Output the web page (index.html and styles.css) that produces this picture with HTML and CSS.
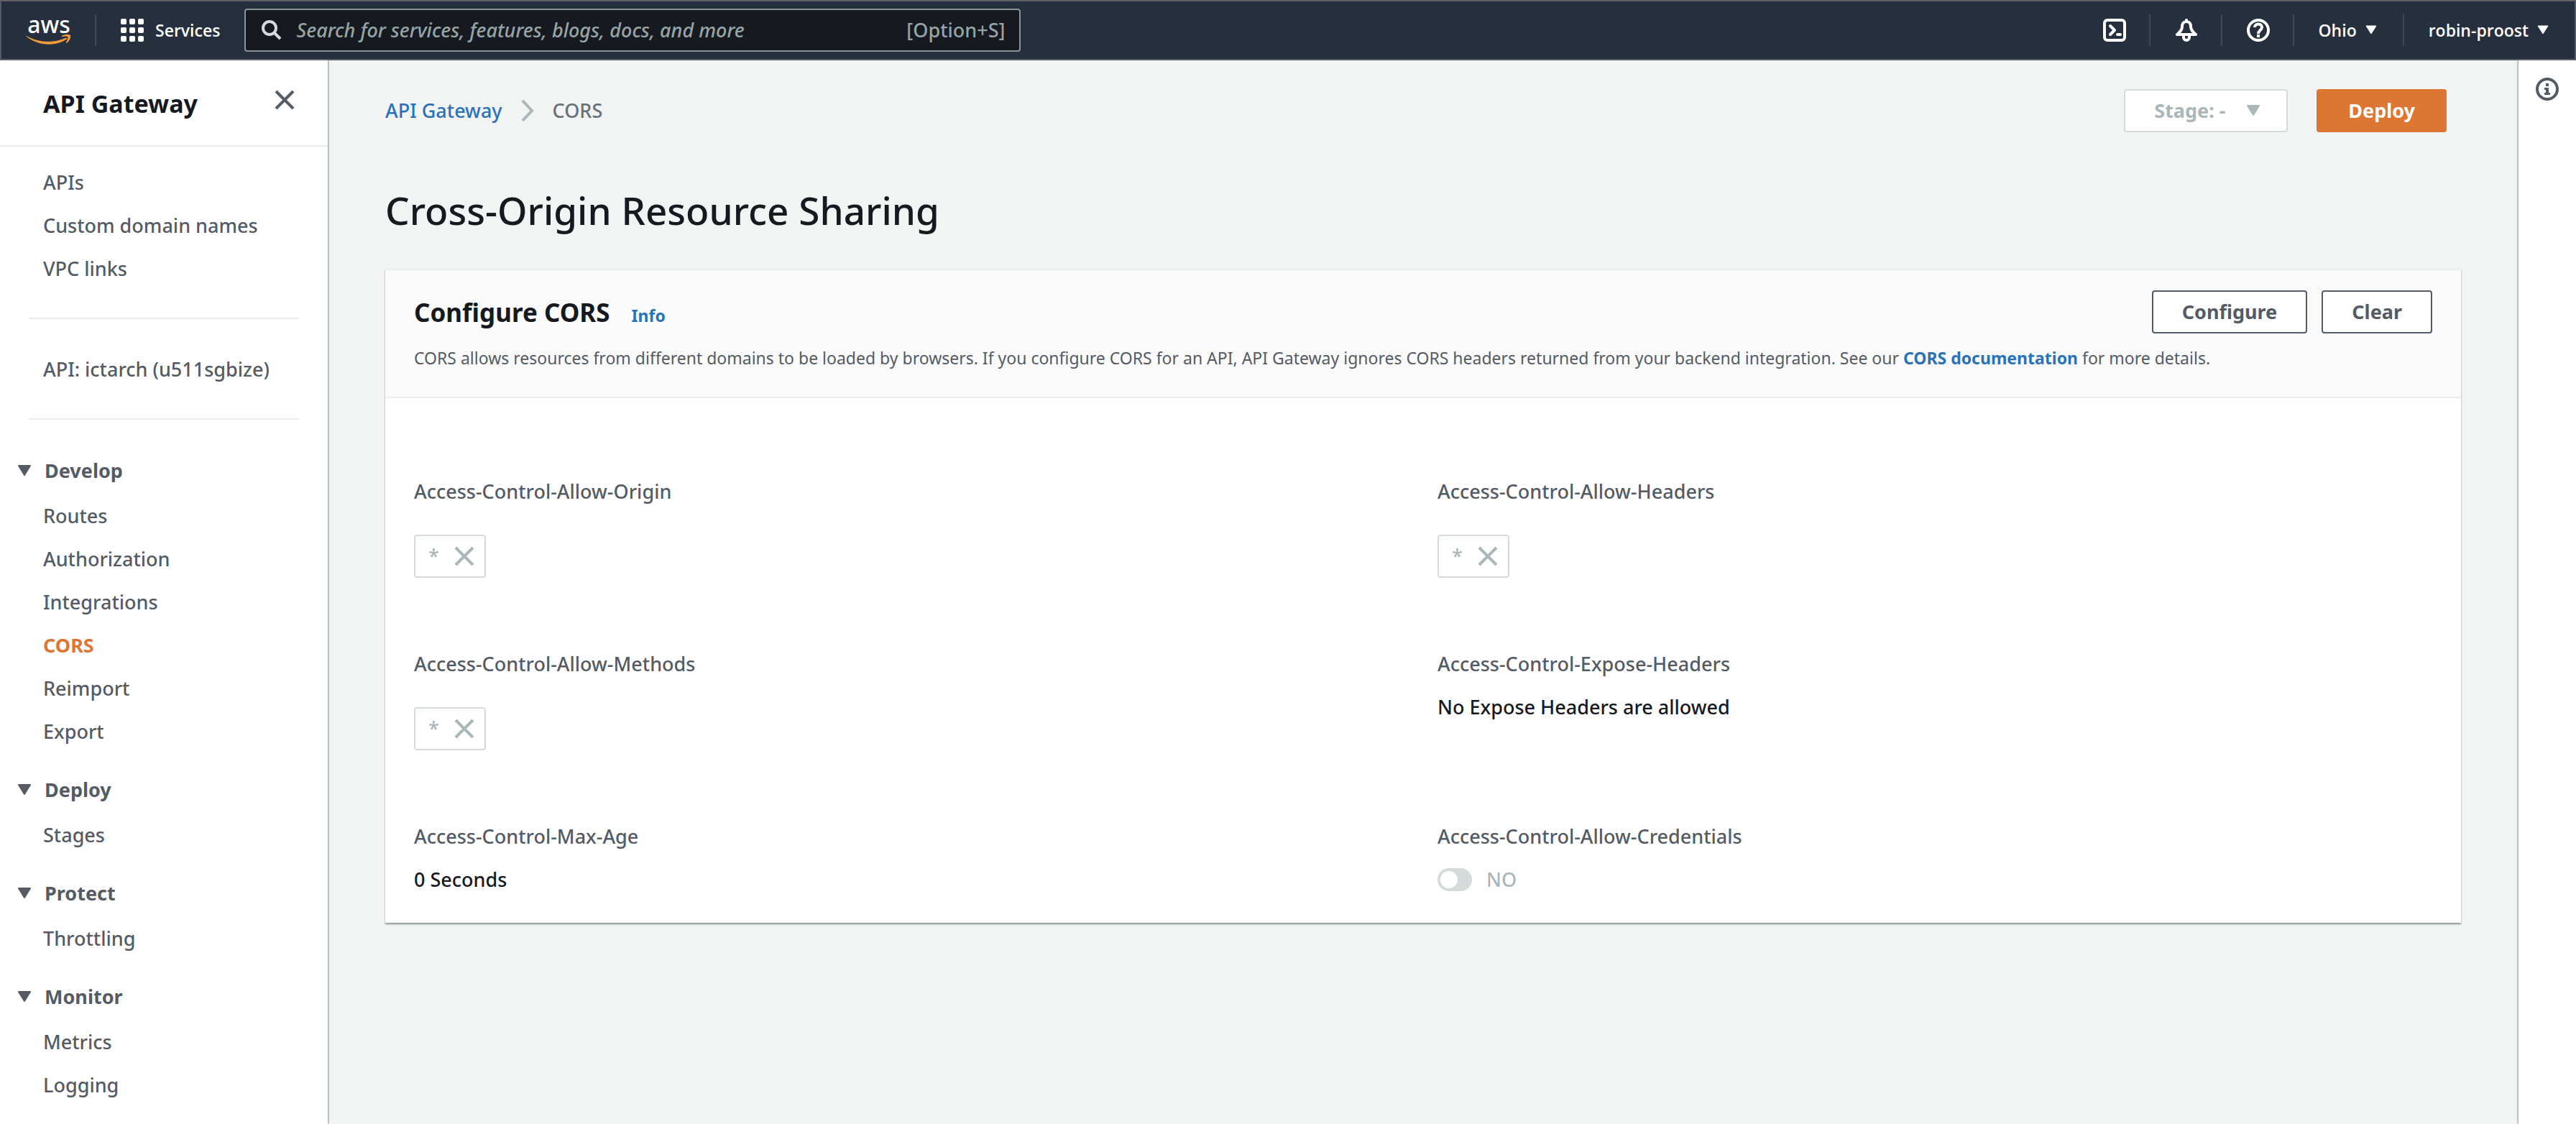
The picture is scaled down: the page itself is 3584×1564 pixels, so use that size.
FILE: index.html
```html
<!DOCTYPE html>
<html lang="en">
<head>
<meta charset="utf-8">
<meta name="viewport" content="width=device-width, initial-scale=1">
<title>API Gateway - CORS</title>
<link rel="stylesheet" href="styles.css">
</head>
<body>
<header class="topbar">
  <a class="logo" href="#" aria-label="AWS home">
    <span class="logo-text">aws</span>
    <svg class="logo-smile" viewBox="0 0 64 16" aria-hidden="true">
      <path d="M1 2C19 12 38 12 55 5c2-1 3 1 1 2C41 17 17 16 1 3c-1-1-1-2 0-1z"/>
      <path d="M50 2c4-3 11-2 12-1 1 2-1 8-5 11-1 0-1 0-1-1 2-4 3-7 2-8-2-1-5 0-7 0-1 0-2 0-1-1z"/>
    </svg>
  </a>
  <button class="services" type="button">
    <svg class="icon" viewBox="0 0 32 32" aria-hidden="true">
      <rect x="0" y="0" width="8" height="8" rx="2"/><rect x="12" y="0" width="8" height="8" rx="2"/><rect x="24" y="0" width="8" height="8" rx="2"/>
      <rect x="0" y="12" width="8" height="8" rx="2"/><rect x="12" y="12" width="8" height="8" rx="2"/><rect x="24" y="12" width="8" height="8" rx="2"/>
      <rect x="0" y="24" width="8" height="8" rx="2"/><rect x="12" y="24" width="8" height="8" rx="2"/><rect x="24" y="24" width="8" height="8" rx="2"/>
    </svg>
    Services
  </button>
  <label class="search">
    <svg class="search-icon" viewBox="0 0 28 28" aria-hidden="true"><circle cx="11" cy="11" r="9"/><path d="M17 17l9 9"/></svg>
    <input type="search" aria-label="Search" placeholder="Search for services, features, blogs, docs, and more">
    <span class="shortcut">[Option+S]</span>
  </label>
  <nav class="tools" aria-label="Account tools">
    <button class="tool" type="button" aria-label="CloudShell">
      <svg class="icon line" viewBox="0 0 32 32"><rect x="2" y="2" width="28" height="28" rx="4"/><path d="M10 10l6 6-6 6M20 22h4" stroke-linecap="round" stroke-linejoin="round"/></svg>
    </button>
    <button class="tool" type="button" aria-label="Notifications">
      <svg class="icon line" viewBox="0 0 32 32"><path d="M16 2v2M16 4c-4 0-6 3-6 7 0 5-3 7-7 11h26c-4-4-7-6-7-11 0-4-2-7-6-7zM12 22v4a4 4 0 0 0 8 0v-4" stroke-linecap="round" stroke-linejoin="round"/></svg>
    </button>
    <button class="tool" type="button" aria-label="Help">
      <svg class="icon line" viewBox="0 0 32 32"><circle cx="16" cy="16" r="14"/><path d="M11 12c0-6 10-6 10 0 0 4-5 4-5 9M16 22v4"/></svg>
    </button>
    <button class="tool menu" type="button">Ohio <svg class="caret-small" viewBox="0 0 16 14" aria-hidden="true"><path d="M1 1h14L8 12z"/></svg></button>
    <button class="tool menu" type="button">robin-proost <svg class="caret-small" viewBox="0 0 16 14" aria-hidden="true"><path d="M1 1h14L8 12z"/></svg></button>
  </nav>
</header>

<div class="layout">
  <aside class="sidebar">
    <div class="side-head">
      <h2>API Gateway</h2>
      <button class="close" type="button" aria-label="Close navigation"><svg class="cross" viewBox="0 0 28 28"><path d="M2 2l24 24M26 2L2 26"/></svg></button>
    </div>
    <nav class="side-nav" aria-label="API Gateway">
      <ul class="links">
        <li><a href="#">APIs</a></li>
        <li><a href="#">Custom domain names</a></li>
        <li><a href="#">VPC links</a></li>
      </ul>
      <hr>
      <p class="api-name">API: ictarch (u511sgbize)</p>
      <hr>
      <section class="group">
        <h3><svg class="caret" viewBox="0 0 20 16" aria-hidden="true"><path d="M2 1h16l-8 13z"/></svg>Develop</h3>
        <ul class="links">
          <li><a href="#">Routes</a></li>
          <li><a href="#">Authorization</a></li>
          <li><a href="#">Integrations</a></li>
          <li><a class="current" href="#" aria-current="page">CORS</a></li>
          <li><a href="#">Reimport</a></li>
          <li><a href="#">Export</a></li>
        </ul>
      </section>
      <section class="group">
        <h3><svg class="caret" viewBox="0 0 20 16" aria-hidden="true"><path d="M2 1h16l-8 13z"/></svg>Deploy</h3>
        <ul class="links"><li><a href="#">Stages</a></li></ul>
      </section>
      <section class="group">
        <h3><svg class="caret" viewBox="0 0 20 16" aria-hidden="true"><path d="M2 1h16l-8 13z"/></svg>Protect</h3>
        <ul class="links"><li><a href="#">Throttling</a></li></ul>
      </section>
      <section class="group">
        <h3><svg class="caret" viewBox="0 0 20 16" aria-hidden="true"><path d="M2 1h16l-8 13z"/></svg>Monitor</h3>
        <ul class="links">
          <li><a href="#">Metrics</a></li>
          <li><a href="#">Logging</a></li>
        </ul>
      </section>
    </nav>
  </aside>

  <main class="content">
    <div class="page-bar">
      <nav class="crumbs" aria-label="Breadcrumb">
        <a href="#">API Gateway</a>
        <svg class="chevron" viewBox="0 0 18 32" aria-hidden="true"><path d="M2 2l13 14L2 30"/></svg>
        <span>CORS</span>
      </nav>
      <div class="page-actions">
        <div class="stage">
          <select aria-label="Stage" disabled><option>Stage: -</option></select>
          <svg class="caret" viewBox="0 0 20 16" aria-hidden="true"><path d="M2 1h16l-8 13z"/></svg>
        </div>
        <button class="btn primary" type="button">Deploy</button>
      </div>
    </div>
    <h1>Cross-Origin Resource Sharing</h1>
    <section class="card">
      <header class="card-head">
        <div class="card-title">
          <h2>Configure CORS</h2>
          <a class="info" href="#">Info</a>
          <div class="card-actions">
            <button class="btn" type="button">Configure</button>
            <button class="btn" type="button">Clear</button>
          </div>
        </div>
        <p>CORS allows resources from different domains to be loaded by browsers. If you configure CORS for an API, API Gateway ignores CORS headers returned from your backend integration. See our <a href="#">CORS documentation</a> for more details.</p>
      </header>
      <dl class="fields">
        <div>
          <dt>Access-Control-Allow-Origin</dt>
          <dd><span class="chip">*<button type="button" disabled aria-label="Remove origin"><svg class="cross" viewBox="0 0 28 28"><path d="M2 2l24 24M26 2L2 26"/></svg></button></span></dd>
        </div>
        <div>
          <dt>Access-Control-Allow-Headers</dt>
          <dd><span class="chip">*<button type="button" disabled aria-label="Remove header"><svg class="cross" viewBox="0 0 28 28"><path d="M2 2l24 24M26 2L2 26"/></svg></button></span></dd>
        </div>
        <div>
          <dt>Access-Control-Allow-Methods</dt>
          <dd><span class="chip">*<button type="button" disabled aria-label="Remove method"><svg class="cross" viewBox="0 0 28 28"><path d="M2 2l24 24M26 2L2 26"/></svg></button></span></dd>
        </div>
        <div>
          <dt>Access-Control-Expose-Headers</dt>
          <dd>No Expose Headers are allowed</dd>
        </div>
        <div>
          <dt>Access-Control-Max-Age</dt>
          <dd>0 Seconds</dd>
        </div>
        <div>
          <dt>Access-Control-Allow-Credentials</dt>
          <dd><label class="toggle"><input type="checkbox" disabled>NO</label></dd>
        </div>
      </dl>
    </section>
  </main>

  <aside class="help-rail">
    <button type="button" aria-label="Open help panel">
      <svg class="icon" viewBox="0 0 32 32"><circle cx="16" cy="16" r="14" fill="none" stroke="currentColor" stroke-width="4"/><path d="M14 8h4v4h-4zM12 14h6v7h2v3h-8v-3h2v-4h-2z"/></svg>
    </button>
  </aside>
</div>
</body>
</html>
```
FILE: styles.css
```css
* {
  box-sizing: border-box;
}

body {
  margin: 0;
  min-height: 100vh;
  display: flex;
  flex-direction: column;
  background: #f2f3f3;
  color: #16191f;
  font: 500 27px/44px "Noto Sans", "Open Sans", sans-serif;
}

h1, h2, h3, p, ul, dl, dd {
  margin: 0;
  padding: 0;
}

a {
  color: #2a72b8;
  text-decoration: none;
}

button {
  margin: 0;
  padding: 0;
  border: 0;
  background: none;
  color: inherit;
  font: inherit;
}

svg {
  display: block;
  flex: none;
  fill: currentColor;
}

.icon {
  width: 32px;
  height: 32px;
}

.line {
  fill: none;
  stroke: currentColor;
  stroke-width: 4;
}

.caret {
  width: 20px;
  height: 16px;
  stroke: currentColor;
  stroke-width: 2;
  stroke-linejoin: round;
}

.caret-small {
  width: 16px;
  height: 14px;
  stroke: currentColor;
  stroke-width: 1;
  stroke-linejoin: round;
}

.cross {
  width: 28px;
  height: 28px;
  stroke: currentColor;
  stroke-width: 4;
}

/* Top bar */
.topbar {
  display: flex;
  align-items: center;
  height: 84px;
  padding-left: 34px;
  border: 2px solid #545b64;
  border-top-color: #5f6165;
  background: #252f3e;
  color: #fff;
  font-family: "Open Sans", "Noto Sans", sans-serif;
  font-size: 23px;
  font-weight: 600;
}

.logo {
  display: flex;
  flex-direction: column;
  align-items: center;
  width: 64px;
  color: #fff;
}

.logo-text {
  font-family: "Noto Sans", "Open Sans", sans-serif;
  font-size: 32px;
  font-weight: 500;
  line-height: 28px;
}

.logo-smile {
  width: 64px;
  height: 16px;
  color: #f19c38;
}

.services {
  display: flex;
  align-items: center;
  gap: 16px;
  height: 44px;
  margin-left: 32px;
  padding: 0 34px;
  border-left: 2px solid #414750;
}

.search {
  display: flex;
  align-items: center;
  flex: 0 1 1080px;
  height: 60px;
  padding: 0 20px 0 22px;
  border: 2px solid #879596;
  border-radius: 4px;
  background: #16191f;
  color: #95a5a6;
  font-family: "Noto Sans", "Open Sans", sans-serif;
  font-size: 27px;
  font-weight: 500;
}

.search-icon {
  width: 28px;
  height: 28px;
  fill: none;
  stroke: #d5dbdb;
  stroke-width: 4;
}

.search input {
  flex: 1;
  min-width: 0;
  margin: 0;
  padding: 0 20px;
  border: 0;
  outline: 0;
  background: none;
  color: #fff;
  font: inherit;
}

.search input::placeholder {
  color: #95a5a6;
  font-style: italic;
}

.tools {
  display: flex;
  margin-left: auto;
}

.tool {
  display: flex;
  align-items: center;
  gap: 12px;
  height: 44px;
  padding: 0 32px 0 34px;
}

.tool + .tool {
  border-left: 2px solid #414750;
}

.menu {
  padding-right: 36px;
}

/* Columns */
.layout {
  display: flex;
  flex: 1;
}

.sidebar {
  flex: 0 0 456px;
  background: #fff;
  box-shadow: 1px 0 2px #879596;
  color: #545b64;
}

.side-head {
  display: flex;
  align-items: center;
  justify-content: space-between;
  height: 120px;
  padding: 0 46px 8px 60px;
  border-bottom: 2px solid #eaeded;
}

.side-head h2 {
  padding-top: 10px;
  color: #16191f;
  font-size: 34px;
}

.side-nav {
  padding: 28px 40px;
}

.side-nav hr {
  height: 2px;
  margin: 46px 0 48px;
  border: 0;
  background: #eaeded;
}

.links {
  display: flex;
  flex-direction: column;
  gap: 16px;
  padding-left: 20px;
  list-style: none;
}

.links a {
  display: block;
  color: #545b64;
}

.links .current {
  color: #dd7632;
  font-weight: 700;
}

.api-name {
  padding-left: 20px;
}

.group {
  padding-top: 1px;
}

.group + .group {
  margin-top: 36px;
}

.group h3 {
  display: flex;
  align-items: center;
  gap: 18px;
  margin: 0 0 19px -16px;
  font-size: 27px;
}

.help-rail {
  flex: 0 0 80px;
  padding: 24px;
  background: #fff;
  box-shadow: -1px 0 2px #879596;
  color: #545b64;
}

/* Page */
.content {
  flex: 1;
  min-width: 0;
  padding: 40px 80px;
}

.page-bar,
.page-actions,
.crumbs {
  display: flex;
  align-items: center;
}

.page-bar {
  justify-content: space-between;
  padding-right: 20px;
}

.crumbs {
  gap: 26px;
  color: #687078;
}

.chevron {
  width: 18px;
  height: 32px;
  fill: none;
  stroke: #aab7b8;
  stroke-width: 4;
}

.page-actions {
  gap: 40px;
}

.stage {
  display: flex;
  align-items: center;
  gap: 28px;
  height: 60px;
  padding: 0 36px 0 40px;
  border: 2px solid #d5dbdb;
  border-radius: 4px;
  background: #fff;
  color: #aab7b8;
}

.stage select {
  appearance: none;
  padding: 0;
  border: 0;
  background: none;
  color: inherit;
  font: inherit;
  font-weight: 700;
  opacity: 1;
}

.btn {
  height: 60px;
  padding: 0 40px;
  border: 2px solid #545b64;
  border-radius: 4px;
  background: #fff;
  color: #545b64;
  font-weight: 700;
}

.primary {
  padding: 0 42px;
  border-color: #dd7632;
  background: #dd7632;
  color: #fff;
}

h1 {
  margin: 70px 0 42px;
  font-size: 53px;
  font-weight: 500;
  line-height: 78px;
}

/* Card */
.card {
  border-top: 2px solid #eaeded;
  background: #fff;
  box-shadow: 0 2px 2px #879596;
}

.card-head {
  padding: 28px 40px 32px;
  border-bottom: 2px solid #eaeded;
  background: #fafafa;
  color: #545b64;
  font-size: 23px;
}

.card-head p {
  font-weight: 400;
}

.card-head a {
  font-weight: 700;
}

.card-title {
  display: flex;
  align-items: center;
  gap: 30px;
  margin-bottom: 12px;
}

.card-title h2 {
  padding-top: 2px;
  color: #16191f;
  font-size: 35px;
}

.info {
  padding-top: 10px;
}

.card-actions {
  display: flex;
  gap: 20px;
  margin-left: auto;
  font-size: 27px;
}

.fields {
  display: grid;
  grid-template-columns: 1fr 1fr;
  grid-auto-rows: 240px;
  column-gap: 40px;
  height: 730px;
  padding: 108px 40px 0;
}

.fields dt {
  margin-bottom: 16px;
  color: #545b64;
}

.chip {
  display: inline-flex;
  align-items: center;
  justify-content: space-between;
  width: 100px;
  height: 60px;
  margin-top: 22px;
  padding: 0 14px 0 18px;
  border: 2px solid #d5dbdb;
  border-radius: 4px;
  color: #aab7b8;
}

.toggle {
  display: flex;
  align-items: center;
  gap: 20px;
  color: #aab7b8;
}

.toggle input {
  appearance: none;
  width: 48px;
  height: 32px;
  margin: 0;
  padding: 4px;
  border-radius: 16px;
  background: #d5dbdb;
}

.toggle input::before {
  content: "";
  display: block;
  width: 24px;
  height: 24px;
  border-radius: 50%;
  background: #fff;
}
```
